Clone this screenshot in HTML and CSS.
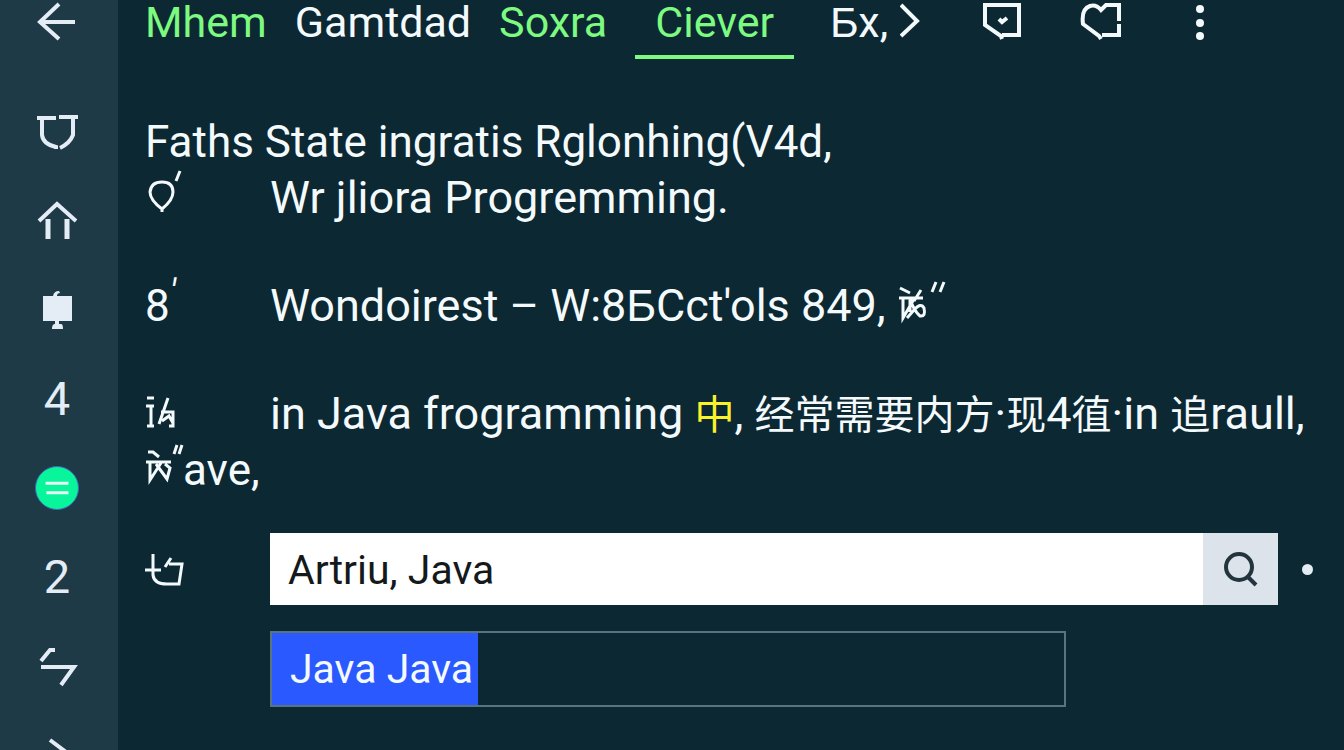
FILE: index.html
```html
<!DOCTYPE html>
<html lang="zh">
<head>
    <meta charset="UTF-8"/>
    <meta name="viewport" content="width=device-width,initial-scale=1"/>
    <title>Java Programming</title>
    <link rel="stylesheet" href="styles.css">
</head>
<body>
<nav class="sidebar" aria-label="Sections">
    <button class="side-item back" type="button" aria-label="Back">
        <svg class="icon" viewBox="0 0 44 44"><path d="M24 4 L5 22 L24 39 M4 22 H40"/></svg>
    </button>
    <button class="side-item" type="button" aria-label="Saved">
        <svg class="icon" viewBox="0 0 44 44"><path d="M2 8 H21 M24 7 H43 M7 8 V25 Q8 34 21 37 V39 M38 8 V25 Q35 33 25 38"/></svg>
    </button>
    <button class="side-item" type="button" aria-label="Home">
        <svg class="icon" viewBox="0 0 44 44"><path d="M4 22 L22 5 L41 22"/><path class="thick" d="M13 20 V40 M32 20 V40"/></svg>
    </button>
    <button class="side-item" type="button" aria-label="Board">
        <svg class="icon" viewBox="0 0 44 44"><path class="solid" d="M8 8 H18 Q19 3 24 3 L25 5 Q22 5 22 8 H37 V33 H24 V36 H26 Q28 36 28 41 H17 Q17 36 20 36 V33 H8 Z"/></svg>
    </button>
    <button class="side-item" type="button">4</button>
    <button class="side-item" type="button" aria-label="Menu">
        <span class="badge"><svg class="icon" viewBox="0 0 44 44"><path d="M10 17 H34 M11 27 H34"/></svg></span>
    </button>
    <button class="side-item" type="button">2</button>
    <button class="side-item" type="button" aria-label="Switch">
        <svg class="icon" viewBox="0 0 44 44"><path d="M6 17 L15 6 H20 M6 23 H39 L26 41"/></svg>
    </button>
    <button class="side-item" type="button" aria-label="Next">
        <svg class="icon" viewBox="0 0 44 44"><path d="M15 7 L35 22 L15 37"/></svg>
    </button>
</nav>

<div class="page">
    <header class="tabs">
        <a class="tab green" href="#">Mhem</a>
        <a class="tab" href="#">Gamtdad</a>
        <a class="tab green" href="#">Soxra</a>
        <a class="tab green active" href="#">Ciever</a>
        <a class="tab more" href="#">Ƃx,<svg class="chevron" viewBox="0 0 20 44"><path d="M1 5 L17 21 L1 36"/></svg></a>
        <div class="actions">
            <button type="button" aria-label="Done">
                <svg class="icon" viewBox="0 0 44 44"><path d="M22 39 L21 36 L5 25 V5 H39 V35 H22 M19 19 L22 22 L27 18"/></svg>
            </button>
            <button type="button" aria-label="Favourite">
                <svg class="icon" viewBox="0 0 44 44"><path d="M40 21 V5 H27 L22 10 Q17 4 11 6 Q2 9 4 24 L20 36 L22 39 M23 35 H40 V24"/></svg>
            </button>
            <button type="button" aria-label="More">
                <svg class="icon" viewBox="0 0 44 44"><g class="solid"><circle cx="22" cy="9" r="4"/><circle cx="22" cy="23" r="4"/><circle cx="22" cy="36" r="4"/></g></svg>
            </button>
        </div>
    </header>

    <main>
        <section class="lines">
            <p>Faths State ingratis Rglonhing(V4d,</p>
            <div class="row">
                <span class="mark"><svg class="sign" viewBox="0 0 38 56"><path d="M17 42 V39 Q5 30 5 22 Q6 12 17 12 Q28 12 28 22 Q28 30 17 39 M31 11 L35 1"/></svg></span>
                <p>Wr jliora Progremming.</p>
            </div>
        </section>
        <div class="row">
            <span class="mark">8<sup>′</sup></span>
            <p>Wondoirest – W:8ƂCct'ols 849, <svg class="sign" viewBox="0 0 38 56"><path d="M3 10 L13 15 M2 20 H26 M6 20 V40 L17 21 M13 22 V34 M13 21 Q17 33 23 38 Q29 39 27 30 Q24 24 17 32 L10 40 M24 12 L17 23 M35 14 L39 4 M43 14 L47 4"/></svg></p>
        </div>
        <section class="lines">
            <div class="row">
                <span class="mark"><svg class="sign" viewBox="0 0 38 56"><path d="M2 12 H9 M1 20 H9 M6 20 V40 M2 40 H9 M23 12 L14 38 M16 26 H28 V40 H24 M17 35 L24 30 L28 37"/></svg></span>
                <p>in Java frogramming <mark class="han">中</mark>, <span class="han">经常需要内方</span>·<span class="han">现</span>4<span class="han">徝</span>·in <span class="han">追</span>raull,</p>
            </div>
            <p><svg class="sign" viewBox="0 0 38 56"><path d="M3 10 H8 L14 15 M1 20 H26 M5 20 V38 L16 21 M11 22 L22 37 L25 26 L20 22 M29 12 L32 3 M34 12 L37 3"/></svg>ave,</p>
        </section>

        <form class="search-form">
            <div class="row">
                <label class="mark" for="query" aria-label="Search"><svg class="sign" viewBox="0 0 38 56"><path d="M8 13 V34 Q9 43 22 43 H34 L37 23 H24 M0 29 H16 M20 26 L26 17"/></svg></label>
                <div class="search">
                    <input type="text" id="query" value="Artriu, Java">
                    <button type="submit" aria-label="Search">
                        <svg class="icon" viewBox="0 0 44 44"><circle cx="20" cy="20" r="13"/><path d="M28 29 L37 38"/></svg>
                    </button>
                </div>
                <span class="dot"></span>
            </div>
            <div class="suggestions">
                <button type="button">Java Java</button>
            </div>
        </form>
    </main>
</div>
</body>
</html>
```

FILE: styles.css
```css
* { box-sizing: border-box; }
body {
    display: flex;
    margin: 0;
    height: 100vh;
    overflow: hidden;
    background: #0c2833;
    color: #f4fafc;
    font-family: Roboto, "Noto Sans CJK SC", sans-serif;
    font-size: 44px;
    line-height: 56px;
}
p { margin: 0; white-space: nowrap; }
a { color: inherit; text-decoration: none; }
button { padding: 0; border: 0; background: none; color: inherit; font: inherit; }
svg { fill: none; stroke: currentColor; stroke-width: 4; }
.icon { display: block; width: 44px; height: 44px; }
.thick { stroke-width: 5; }
.solid { fill: currentColor; stroke: none; }

.sidebar { display: flex; flex-direction: column; flex: none; width: 118px; overflow: hidden; background: #1f3a47; color: #e4edf5; font-size: 47px; }
.side-item { display: flex; flex: none; align-items: center; justify-content: center; height: 89px; padding-right: 4px; }
.back { height: 44px; margin-bottom: 43px; }
.badge { border: 1px solid #3d68b8; border-radius: 50%; background: #08f59b; color: #e8fff8; }
.badge .icon { width: 42px; height: 42px; stroke-width: 3; }

.page { flex: 1; min-width: 0; padding-left: 27px; }
.tabs { display: flex; gap: 28px; font-size: 43px; line-height: 44px; }
.tab { height: 59px; }
.green { color: #7dfa80; }
.active { padding: 0 20px; border-bottom: 4px solid #7dfa80; }
.more { display: flex; gap: 12px; margin-left: 8px; }
.chevron { width: 20px; height: 44px; }
.actions { display: flex; gap: 55px; align-items: flex-start; margin-left: 32px; }

main { display: flex; flex-direction: column; gap: 52px; padding-top: 55px; }
.row { display: flex; }
.row p { font-size: 45px; }
.mark { flex: none; width: 125px; }
.mark sup { font-size: 36px; font-style: italic; line-height: 0; }
mark { background: none; color: #fbf22c; }
.han { font-size: 40px; line-height: 40px; }
.sign { width: 38px; height: 56px; overflow: visible; stroke-width: 3; vertical-align: bottom; }

.search-form { display: flex; flex-direction: column; gap: 26px; margin-top: -17px; font-size: 41px; }
.search-form .row { align-items: center; }
.search { display: flex; flex: 1; height: 72px; background: #fff; }
.search input { flex: 1; min-width: 0; padding: 2px 18px 0; border: 0; background: none; color: #14191c; font: inherit; }
.search button { display: grid; place-items: center; width: 75px; background: #dde3ea; color: #22343d; }
.dot { width: 11px; height: 11px; margin: 0 31px 0 24px; border-radius: 50%; background: #e4ecf3; }
.suggestions { display: flex; height: 76px; margin: 0 278px 0 125px; border: 2px solid #58747f; }
.suggestions button { padding: 0 5px 0 18px; background: #2959ff; }
```
